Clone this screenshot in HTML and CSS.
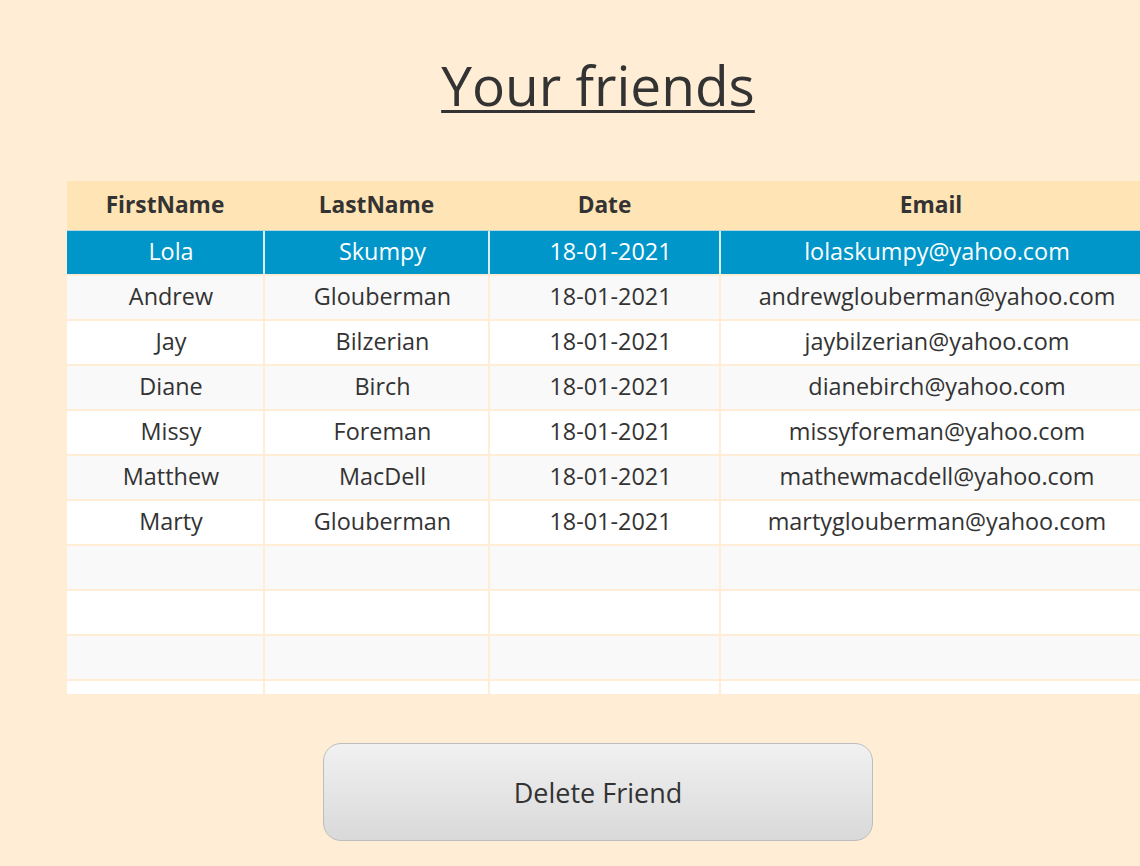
FILE: index.html
```html
<!DOCTYPE html>
<html lang="en">
<head>
<meta charset="utf-8">
<title>Your friends</title>
<link rel="stylesheet" href="styles.css">
</head>
<body>
<main class="page">
  <h1 class="title">Your friends</h1>
  <section class="table">
    <div class="row head">
      <div class="cell">FirstName</div>
      <div class="cell">LastName</div>
      <div class="cell">Date</div>
      <div class="cell">Email</div>
    </div>
    <div class="body">
      <div class="row selected">
        <div class="cell">Lola</div><div class="cell">Skumpy</div><div class="cell">18-01-2021</div><div class="cell">lolaskumpy@yahoo.com</div>
      </div>
      <div class="row odd">
        <div class="cell">Andrew</div><div class="cell">Glouberman</div><div class="cell">18-01-2021</div><div class="cell">andrewglouberman@yahoo.com</div>
      </div>
      <div class="row">
        <div class="cell">Jay</div><div class="cell">Bilzerian</div><div class="cell">18-01-2021</div><div class="cell">jaybilzerian@yahoo.com</div>
      </div>
      <div class="row odd">
        <div class="cell">Diane</div><div class="cell">Birch</div><div class="cell">18-01-2021</div><div class="cell">dianebirch@yahoo.com</div>
      </div>
      <div class="row">
        <div class="cell">Missy</div><div class="cell">Foreman</div><div class="cell">18-01-2021</div><div class="cell">missyforeman@yahoo.com</div>
      </div>
      <div class="row odd">
        <div class="cell">Matthew</div><div class="cell">MacDell</div><div class="cell">18-01-2021</div><div class="cell">mathewmacdell@yahoo.com</div>
      </div>
      <div class="row">
        <div class="cell">Marty</div><div class="cell">Glouberman</div><div class="cell">18-01-2021</div><div class="cell">martyglouberman@yahoo.com</div>
      </div>
      <div class="row odd"><div class="cell"></div><div class="cell"></div><div class="cell"></div><div class="cell"></div></div>
      <div class="row"><div class="cell"></div><div class="cell"></div><div class="cell"></div><div class="cell"></div></div>
      <div class="row odd"><div class="cell"></div><div class="cell"></div><div class="cell"></div><div class="cell"></div></div>
      <div class="row"><div class="cell"></div><div class="cell"></div><div class="cell"></div><div class="cell"></div></div>
    </div>
  </section>
  <div class="actions">
    <button class="btn" type="button">Delete Friend</button>
  </div>
</main>
</body>
</html>
```

FILE: styles.css
```css
html, body {
  margin: 0;
  padding: 0;
  background: #ffeed5;
  overflow: hidden;
}
body {
  font-family: "Open Sans", "Noto Sans", sans-serif;
  color: #333333;
}
.page {
  width: 1196px;
  height: 866px;
  display: flex;
  flex-direction: column;
  align-items: center;
}
.title {
  margin: 48px 0 0 0;
  font-size: 55px;
  font-weight: 400;
  line-height: 74px;
  text-decoration: underline;
  text-decoration-thickness: 3px;
  text-underline-offset: 4px;
  color: #333333;
}
.table {
  align-self: flex-start;
  margin: 59px 0 0 67px;
  width: 1074px;
  display: flex;
  flex-direction: column;
}
.row {
  display: grid;
  grid-template-columns: 196px 223px 229px 420px;
  column-gap: 2px;
  height: 43px;
}
.head {
  height: 49px;
  background: #ffe4b5;
  border-bottom: 1px solid #b7d6e0;
}
.head .cell {
  font-weight: 700;
  font-size: 22.7px;
  padding: 0 0 2px 0;
}
.body {
  height: 463px;
  overflow: hidden;
  display: flex;
  flex-direction: column;
  row-gap: 2px;
}
.body .row {
  flex: 0 0 43px;
}
.cell {
  display: flex;
  align-items: center;
  justify-content: center;
  font-size: 23.4px;
  background: #ffffff;
  white-space: nowrap;
  overflow: hidden;
  padding: 0 0 3px 12px;
  box-sizing: border-box;
}
.head .cell {
  background: transparent;
}
.odd .cell {
  background: #f9f9f9;
}
.selected {
  background: #d6eef7;
}
.selected .cell {
  background: #0096c9;
  color: #ffffff;
}
.actions {
  margin-top: 49px;
}
.btn {
  width: 550px;
  height: 98px;
  border: 1px solid #bdbdbd;
  border-radius: 18px;
  background: linear-gradient(#f1f1f1, #d9d9d9);
  font-family: "Open Sans", "Noto Sans", sans-serif;
  font-size: 27px;
  color: #333333;
  padding: 0;
}
```
